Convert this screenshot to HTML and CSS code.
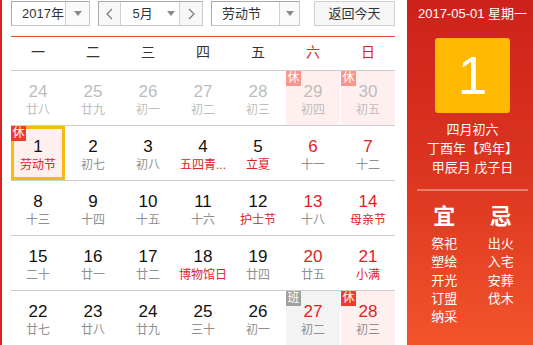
FILE: index.html
```html
<!DOCTYPE html>
<html lang="zh-CN">
<head>
<meta charset="utf-8">
<title>万年历</title>
<link rel="stylesheet" href="styles.css">
</head>
<body>
<div class="page">
  <div class="main">
    <div class="toolbar">
      <div class="sel year">
        <span class="sel-text">2017年</span>
        <span class="sel-btn"><i class="tri"></i></span>
      </div>
      <div class="sel month">
        <span class="nav"><svg width="7" height="12" viewBox="0 0 7 12"><polyline points="6,1 1,6 6,11" fill="none" stroke="#777" stroke-width="1.2"/></svg></span>
        <span class="month-mid"><span class="month-text">5月</span><i class="tri"></i></span>
        <span class="nav nav-r"><svg width="7" height="12" viewBox="0 0 7 12"><polyline points="1,1 6,6 1,11" fill="none" stroke="#777" stroke-width="1.2"/></svg></span>
      </div>
      <div class="sel holiday">
        <span class="sel-text">劳动节</span>
        <span class="sel-btn"><i class="tri"></i></span>
      </div>
      <div class="today-btn">返回今天</div>
    </div>
    <div class="redline"></div>
    <div class="weekhead">
      <span>一</span><span>二</span><span>三</span><span>四</span><span>五</span><span class="wk">六</span><span class="wk">日</span>
    </div>
    <div class="grid">
      <div class="row">
        <div class="cell other"><span class="num">24</span><span class="lunar">廿八</span></div>
        <div class="cell other"><span class="num">25</span><span class="lunar">廿九</span></div>
        <div class="cell other"><span class="num">26</span><span class="lunar">初一</span></div>
        <div class="cell other"><span class="num">27</span><span class="lunar">初二</span></div>
        <div class="cell other"><span class="num">28</span><span class="lunar">初三</span></div>
        <div class="cell other rest"><i class="badge">休</i><span class="num">29</span><span class="lunar">初四</span></div>
        <div class="cell other rest"><i class="badge">休</i><span class="num">30</span><span class="lunar">初五</span></div>
      </div>
      <div class="row">
        <div class="cell rest selected"><i class="badge">休</i><span class="num">1</span><span class="lunar fest">劳动节</span></div>
        <div class="cell"><span class="num">2</span><span class="lunar">初七</span></div>
        <div class="cell"><span class="num">3</span><span class="lunar">初八</span></div>
        <div class="cell"><span class="num">4</span><span class="lunar fest">五四青...</span></div>
        <div class="cell"><span class="num">5</span><span class="lunar fest">立夏</span></div>
        <div class="cell weekend"><span class="num">6</span><span class="lunar">十一</span></div>
        <div class="cell weekend"><span class="num">7</span><span class="lunar">十二</span></div>
      </div>
      <div class="row">
        <div class="cell"><span class="num">8</span><span class="lunar">十三</span></div>
        <div class="cell"><span class="num">9</span><span class="lunar">十四</span></div>
        <div class="cell"><span class="num">10</span><span class="lunar">十五</span></div>
        <div class="cell"><span class="num">11</span><span class="lunar">十六</span></div>
        <div class="cell"><span class="num">12</span><span class="lunar fest">护士节</span></div>
        <div class="cell weekend"><span class="num">13</span><span class="lunar">十八</span></div>
        <div class="cell weekend"><span class="num">14</span><span class="lunar fest">母亲节</span></div>
      </div>
      <div class="row">
        <div class="cell"><span class="num">15</span><span class="lunar">二十</span></div>
        <div class="cell"><span class="num">16</span><span class="lunar">廿一</span></div>
        <div class="cell"><span class="num">17</span><span class="lunar">廿二</span></div>
        <div class="cell"><span class="num">18</span><span class="lunar fest">博物馆日</span></div>
        <div class="cell"><span class="num">19</span><span class="lunar">廿四</span></div>
        <div class="cell weekend"><span class="num">20</span><span class="lunar">廿五</span></div>
        <div class="cell weekend"><span class="num">21</span><span class="lunar fest">小满</span></div>
      </div>
      <div class="row">
        <div class="cell"><span class="num">22</span><span class="lunar">廿七</span></div>
        <div class="cell"><span class="num">23</span><span class="lunar">廿八</span></div>
        <div class="cell"><span class="num">24</span><span class="lunar">廿九</span></div>
        <div class="cell"><span class="num">25</span><span class="lunar">三十</span></div>
        <div class="cell"><span class="num">26</span><span class="lunar">初一</span></div>
        <div class="cell weekend work"><i class="badge">班</i><span class="num">27</span><span class="lunar">初二</span></div>
        <div class="cell weekend rest"><i class="badge">休</i><span class="num">28</span><span class="lunar">初三</span></div>
      </div>
    </div>
  </div>
  <div class="side">
    <div class="side-date">2017-05-01 星期一</div>
    <div class="bigday">1</div>
    <div class="side-lunar">
      <div>四月初六</div>
      <div>丁酉年【鸡年】</div>
      <div>甲辰月 戊子日</div>
    </div>
    <div class="side-line"></div>
    <div class="yiji">
      <div class="yj-col">
        <div class="yj-title">宜</div>
        <div class="yj-item">祭祀</div>
        <div class="yj-item">塑绘</div>
        <div class="yj-item">开光</div>
        <div class="yj-item">订盟</div>
        <div class="yj-item">纳采</div>
      </div>
      <div class="yj-col">
        <div class="yj-title">忌</div>
        <div class="yj-item">出火</div>
        <div class="yj-item">入宅</div>
        <div class="yj-item">安葬</div>
        <div class="yj-item">伐木</div>
      </div>
    </div>
  </div>
</div>
</body>
</html>
```

FILE: styles.css
```css
html, body {
  margin: 0;
  padding: 0;
  overflow: hidden;
}
body {
  font-family: "Liberation Sans", "Noto Sans CJK SC", sans-serif;
  background: #fff;
  color: #333;
}
.page {
  display: flex;
  width: 533px;
  height: 345px;
}
.main {
  width: 407px;
  box-sizing: border-box;
  border-left: 2px solid #d7241c;
  padding-left: 9px;
  flex: none;
}
.toolbar {
  display: flex;
  margin-top: 1px;
  height: 25px;
}
.sel {
  display: flex;
  box-sizing: border-box;
  height: 25px;
  border: 1px solid #c9c9c9;
  border-top-color: #a9a9a9;
  border-left-color: #a9a9a9;
  background: #fff;
  font-size: 13px;
  line-height: 23px;
  color: #333;
}
.sel-text {
  flex: 1;
  padding-left: 10px;
}
.sel-btn {
  display: flex;
  align-items: center;
  justify-content: center;
  border-left: 1px solid #cfcfcf;
  background: #fafafa;
}
.tri {
  display: block;
  width: 0;
  height: 0;
  border-left: 4px solid transparent;
  border-right: 4px solid transparent;
  border-top: 5px solid #8a8a8a;
}
.year {
  width: 79px;
}
.year .sel-btn {
  width: 23px;
}
.month {
  width: 105px;
  margin-left: 8px;
  background: #f7f7f7;
}
.nav {
  width: 21px;
  display: flex;
  align-items: center;
  justify-content: center;
}
.nav-r {
  width: 22px;
}
.month-mid {
  width: 60px;
  display: flex;
  align-items: center;
  background: #fff;
  border-left: 1px solid #d2d2d2;
  border-right: 1px solid #d2d2d2;
}
.month-text {
  width: 40px;
  text-align: center;
  padding-left: 2px;
}
.month-mid .tri {
  margin-left: 4px;
}
.holiday {
  width: 89px;
  margin-left: 8px;
}
.holiday .sel-btn {
  width: 19px;
}
.today-btn {
  width: 81px;
  height: 25px;
  box-sizing: border-box;
  margin-left: 14px;
  border: 1px solid #cfcfcf;
  background: #f6f6f6;
  font-size: 13px;
  line-height: 23px;
  text-align: center;
  color: #333;
}
.redline {
  margin-top: 10px;
  width: 384px;
  height: 1px;
  background: #ee4a38;
}
.weekhead {
  display: grid;
  grid-template-columns: repeat(7, 54px);
  column-gap: 1px;
  width: 384px;
  height: 33px;
  line-height: 31px;
  font-size: 14px;
  text-align: center;
  color: #333;
}
.weekhead .wk {
  color: #e0221e;
}
.grid {
  width: 384px;
}
.row {
  display: grid;
  grid-template-columns: repeat(7, 54px);
  column-gap: 1px;
  border-top: 1px solid #cccccc;
}
.cell {
  position: relative;
  height: 54px;
  box-sizing: border-box;
  padding-top: 11px;
  text-align: center;
  overflow: hidden;
}
.num {
  display: block;
  font-size: 17px;
  line-height: 20px;
  color: #111;
}
.lunar {
  display: block;
  font-size: 12px;
  line-height: 16px;
  color: #8f8f8f;
  white-space: nowrap;
}
.lunar.fest {
  color: #e0221e;
}
.weekend .num {
  color: #e0221e;
}
.other .num,
.other .lunar {
  color: #bdbdbd;
}
.rest {
  background: #fff0ef;
}
.work {
  background: #f3f3f3;
}
.badge {
  position: absolute;
  left: 0;
  top: 0;
  width: 15px;
  height: 15px;
  font-style: normal;
  font-size: 12px;
  line-height: 15px;
  text-align: center;
  color: #fff;
  background: #f03a2e;
}
.other .badge {
  background: #f8968c;
}
.work .badge {
  background: #a0a0a0;
}
.selected {
  box-shadow: inset 0 0 0 3px #fcb712;
}
.side {
  flex: 1;
  box-sizing: border-box;
  padding-left: 5px;
  background: linear-gradient(180deg, #cd211b 0%, #dc3520 50%, #f2542b 100%);
  color: #fff;
  display: flex;
  flex-direction: column;
  align-items: center;
}
.side-date {
  margin-top: 5px;
  font-size: 13px;
  line-height: 18px;
  white-space: nowrap;
}
.bigday {
  margin-top: 15px;
  width: 75px;
  height: 75px;
  border-radius: 3px;
  background: #ffb900;
  font-size: 53px;
  line-height: 75px;
  text-align: center;
  color: #fff;
}
.side-lunar {
  margin-top: 7px;
  font-size: 13px;
  line-height: 19px;
  text-align: center;
  white-space: nowrap;
}
.side-line {
  margin-top: 12px;
  width: 111px;
  height: 2px;
  background: rgba(255, 255, 255, 0.35);
}
.yiji {
  display: flex;
  width: 113px;
  margin-top: 13px;
}
.yj-col {
  flex: 1;
  display: flex;
  flex-direction: column;
  align-items: center;
}
.yj-title {
  font-size: 22px;
  font-weight: bold;
  line-height: 26px;
  margin-bottom: 5px;
}
.yj-item {
  font-size: 13px;
  line-height: 18.3px;
}
```
